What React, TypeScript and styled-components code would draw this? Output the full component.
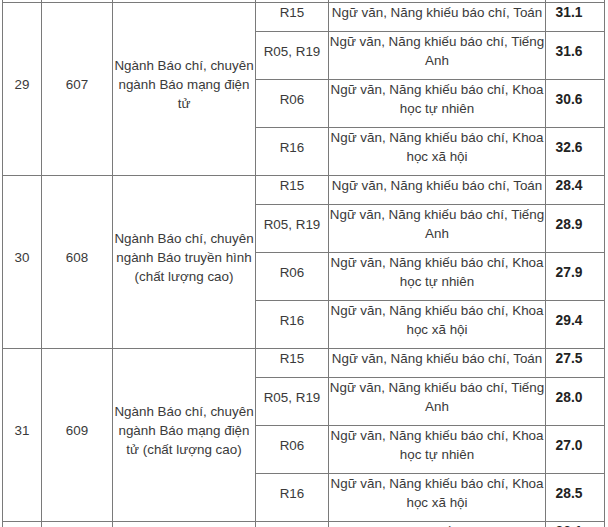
import styled, { createGlobalStyle } from 'styled-components'

interface Option {
  combo: string
  subjects: string
  score: string
}

interface Major {
  stt: string
  code: string
  name: string
  options: Option[]
}

const SUBJECTS = {
  R15: 'Ngữ văn, Năng khiếu báo chí, Toán',
  R05: 'Ngữ văn, Năng khiếu báo chí, Tiếng Anh',
  R06: 'Ngữ văn, Năng khiếu báo chí, Khoa học tự nhiên',
  R16: 'Ngữ văn, Năng khiếu báo chí, Khoa học xã hội',
}

function optionsFor(scores: [string, string, string, string]): Option[] {
  return [
    { combo: 'R15', subjects: SUBJECTS.R15, score: scores[0] },
    { combo: 'R05, R19', subjects: SUBJECTS.R05, score: scores[1] },
    { combo: 'R06', subjects: SUBJECTS.R06, score: scores[2] },
    { combo: 'R16', subjects: SUBJECTS.R16, score: scores[3] },
  ]
}

const majors: Major[] = [
  {
    stt: '29',
    code: '607',
    name: 'Ngành Báo chí, chuyên ngành Báo mạng điện tử',
    options: optionsFor(['31.1', '31.6', '30.6', '32.6']),
  },
  {
    stt: '30',
    code: '608',
    name: 'Ngành Báo chí, chuyên ngành Báo truyền hình (chất lượng cao)',
    options: optionsFor(['28.4', '28.9', '27.9', '29.4']),
  },
  {
    stt: '31',
    code: '609',
    name: 'Ngành Báo chí, chuyên ngành Báo mạng điện tử (chất lượng cao)',
    options: optionsFor(['27.5', '28.0', '27.0', '28.5']),
  },
  {
    stt: '32',
    code: '610',
    name: 'Ngành Báo chí, chuyên ngành Báo ảnh',
    options: optionsFor(['26.1', '26.6', '25.6', '27.6']),
  },
]

const COL_WIDTHS = [39, 71, 143, 73, 217, 59]

export default function App() {
  return (
    <>
      <GlobalStyle />
      <Page>
        <Table>
          <colgroup>
            {COL_WIDTHS.map((w, i) => (
              <col key={i} style={{ width: w }} />
            ))}
          </colgroup>
          <tbody>
            <StubRow>
              {COL_WIDTHS.map((_, i) => (
                <StubCell key={i} />
              ))}
            </StubRow>
            {majors.map((major) =>
              major.options.map((opt, i) => (
                <tr key={major.stt + opt.combo}>
                  {i === 0 && (
                    <>
                      <Cell rowSpan={major.options.length}>{major.stt}</Cell>
                      <Cell rowSpan={major.options.length}>{major.code}</Cell>
                      <Cell rowSpan={major.options.length}>{major.name}</Cell>
                    </>
                  )}
                  <Cell>{opt.combo}</Cell>
                  <Cell>{opt.subjects}</Cell>
                  <ScoreCell>{opt.score}</ScoreCell>
                </tr>
              ))
            )}
          </tbody>
        </Table>
      </Page>
    </>
  )
}

const GlobalStyle = createGlobalStyle`
  html, body {
    margin: 0;
    padding: 0;
    background: #ffffff;
    overflow: hidden;
  }
`

const Page = styled.div`
  padding-left: 2px;
  font-family: 'Liberation Sans', Arial, sans-serif;
  font-size: 13.4px;
  color: #3a3a3a;
`

const Table = styled.table`
  border-collapse: collapse;
  table-layout: fixed;
  width: 603px;
`

const StubRow = styled.tr`
  height: 2px;
`

const StubCell = styled.td`
  padding: 0;
  height: 2px;
  border: 1px solid #7a7a7a;
  border-top: none;
`

const Cell = styled.td`
  border: 1px solid #7a7a7a;
  padding: 0 0 9px;
  line-height: 19px;
  text-align: center;
  vertical-align: middle;
`

const ScoreCell = styled(Cell)`
  padding-right: 12px;
  font-size: 13.8px;
  font-weight: 700;
  color: #222222;
`
